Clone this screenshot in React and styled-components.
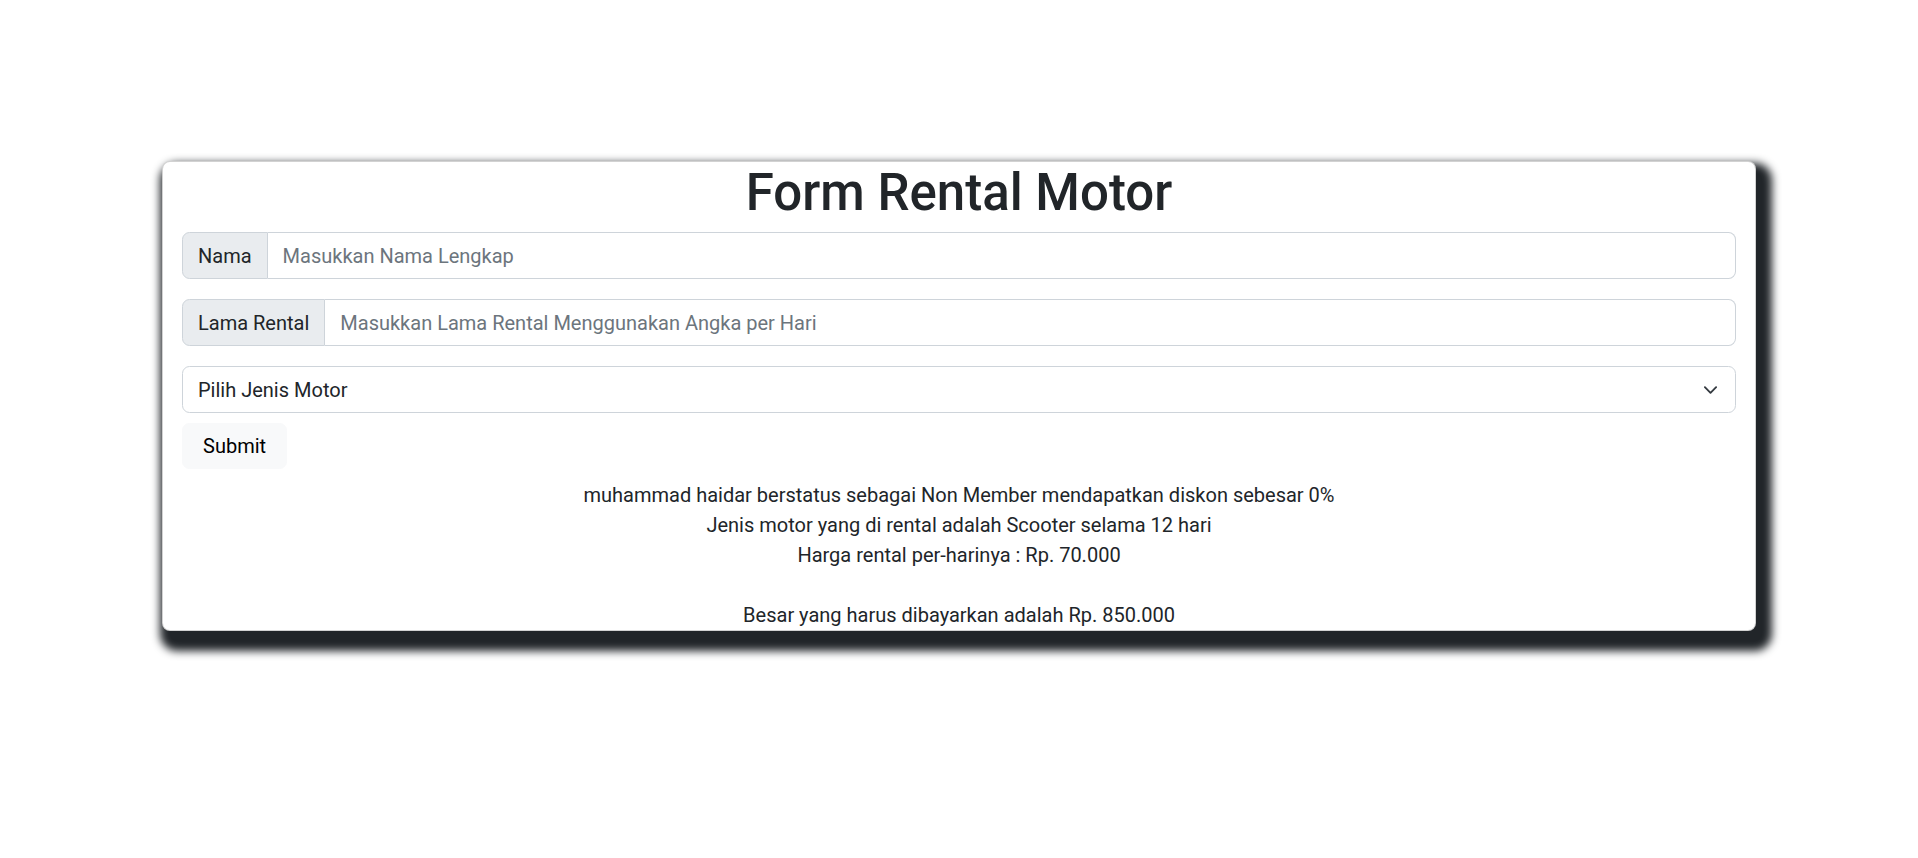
import styled, { createGlobalStyle } from "styled-components";

const GlobalStyle = createGlobalStyle`
  * {
    box-sizing: border-box;
  }
  body {
    margin: 0;
    background: #ffffff;
    color: #212529;
    font-family: Roboto, "Noto Sans", sans-serif;
  }
`;

const Page = styled.div`
  padding-top: 161px;
  min-height: 858px;
`;

const Card = styled.div`
  width: 1594px;
  margin: 0 auto;
  background: #ffffff;
  border: 1px solid rgba(0, 0, 0, 0.175);
  border-radius: 8px;
  box-shadow: 7px 11px 8px 9px #212529;
  padding: 0 19px;
`;

const Title = styled.h1`
  margin: 0 0 10px;
  height: 60px;
  font-size: 51px;
  font-weight: 500;
  line-height: 62px;
  text-align: center;
  color: #212529;
`;

const InputGroup = styled.div`
  display: flex;
  height: 47px;
  margin-bottom: 20px;
`;

const Addon = styled.span`
  display: flex;
  align-items: center;
  padding: 0 15px;
  font-size: 20px;
  color: #212529;
  background: #e9ecef;
  border: 1px solid #ced4da;
  border-radius: 7.5px 0 0 7.5px;
  white-space: nowrap;
`;

const TextInput = styled.input`
  flex: 1;
  min-width: 0;
  padding: 0 15px;
  font-family: inherit;
  font-size: 20px;
  color: #212529;
  background: #ffffff;
  border: 1px solid #ced4da;
  border-left: 0;
  border-radius: 0 7.5px 7.5px 0;
  outline: none;

  &::placeholder {
    color: #6c757d;
  }
`;

const SelectWrap = styled.div`
  position: relative;
  height: 47px;
  margin-bottom: 10px;
`;

const Select = styled.select`
  width: 100%;
  height: 100%;
  padding: 0 50px 0 15px;
  font-family: inherit;
  font-size: 20px;
  color: #212529;
  background: #ffffff;
  border: 1px solid #ced4da;
  border-radius: 7.5px;
  appearance: none;
  outline: none;
`;

const Chevron = styled.svg`
  position: absolute;
  right: 18px;
  top: 50%;
  transform: translateY(-50%);
  pointer-events: none;
`;

const Button = styled.button`
  display: block;
  height: 46px;
  padding: 0 20px;
  margin-bottom: 11px;
  font-family: inherit;
  font-size: 20px;
  color: #000000;
  background: #f8f9fa;
  border: 1px solid #f8f9fa;
  border-radius: 7.5px;
`;

const Result = styled.div`
  font-size: 20px;
  line-height: 30px;
  text-align: center;
  color: #212529;
`;

export default function App() {
  return (
    <>
      <GlobalStyle />
      <Page>
        <Card>
          <Title>Form Rental Motor</Title>
          <InputGroup>
            <Addon>Nama</Addon>
            <TextInput placeholder="Masukkan Nama Lengkap" />
          </InputGroup>
          <InputGroup>
            <Addon>Lama Rental</Addon>
            <TextInput placeholder="Masukkan Lama Rental Menggunakan Angka per Hari" />
          </InputGroup>
          <SelectWrap>
            <Select defaultValue="">
              <option value="">Pilih Jenis Motor</option>
              <option value="scooter">Scooter</option>
              <option value="sport">Sport</option>
            </Select>
            <Chevron width="15" height="15" viewBox="0 0 16 16">
              <path
                d="m2 5 6 6 6-6"
                fill="none"
                stroke="#343a40"
                strokeWidth="2"
                strokeLinecap="round"
                strokeLinejoin="round"
              />
            </Chevron>
          </SelectWrap>
          <Button type="submit">Submit</Button>
          <Result>
            muhammad haidar berstatus sebagai Non Member mendapatkan diskon sebesar 0%
            <br />
            Jenis motor yang di rental adalah Scooter selama 12 hari
            <br />
            Harga rental per-harinya : Rp. 70.000
            <br />
            <br />
            Besar yang harus dibayarkan adalah Rp. 850.000
          </Result>
        </Card>
      </Page>
    </>
  );
}
